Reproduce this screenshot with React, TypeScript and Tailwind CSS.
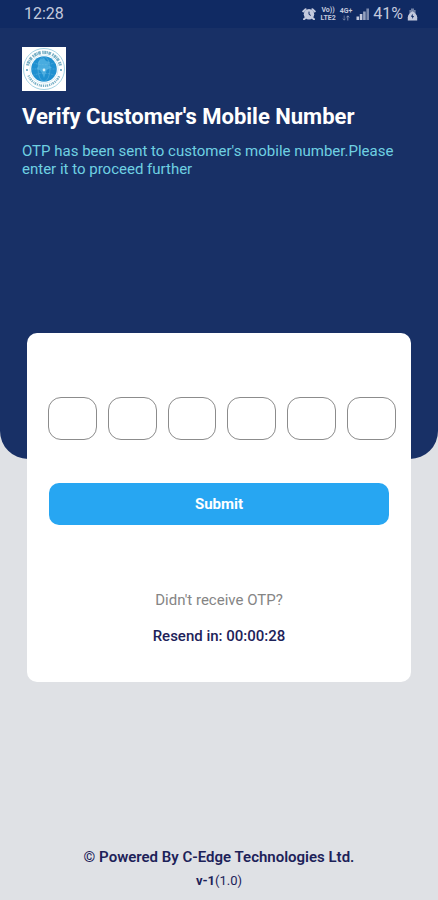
import { useState } from 'react';

const OTP_LENGTH = 6;

const AlarmIcon = () => (
  <svg className="h-3 w-[14px]" viewBox="0 0 14 12" fill="none" aria-hidden="true">
    <circle cx="7" cy="6.2" r="5.2" fill="currentColor" />
    <path d="M1.2 3.4L3.6 1.2M12.8 3.4L10.4 1.2M3.4 10l-1.4 1.3M10.6 10l1.4 1.3" stroke="currentColor" strokeWidth="2" strokeLinecap="round" />
    <path d="M7 3.6v2.8l1.8 1" stroke="#102a63" strokeWidth="1" />
  </svg>
);

const DataArrowsIcon = () => (
  <svg className="h-[6px] w-2" viewBox="0 0 8 6" fill="none" stroke="currentColor" strokeWidth="1" aria-hidden="true">
    <path d="M2.2 0.5v4.6M0.8 3.6l1.4 1.6 1.4-1.6" opacity="0.4" />
    <path d="M5.8 5.5V0.9M4.4 2.4l1.4-1.6 1.4 1.6" opacity="0.6" />
  </svg>
);

const SignalIcon = () => (
  <svg className="h-3 w-[13px]" viewBox="0 0 13 12" fill="currentColor" aria-hidden="true">
    <rect x="0.5" y="8.5" width="2.6" height="3.5" />
    <rect x="3.8" y="6" width="2.6" height="6" />
    <rect x="7.1" y="3.5" width="2.6" height="8.5" opacity="0.75" />
    <rect x="10.4" y="0.5" width="2.6" height="11.5" opacity="0.6" />
  </svg>
);

const BatteryIcon = () => (
  <svg className="h-[13px] w-[11px]" viewBox="0 0 11 13" aria-hidden="true">
    <path d="M4 0.5h3v1.4h1.6v4H2.4v-4H4z" fill="currentColor" opacity="0.55" />
    <path d="M5.5 3.2C8 5 10.2 6.6 10.2 9.2V12.5H0.8V9.2C0.8 6.6 3 5 5.5 3.2z" fill="currentColor" />
    <path d="M5.5 5.8L3.9 8.8h1.3v2.3l1.9-3.2H5.8z" fill="#102a63" />
  </svg>
);

const BankLogo = () => (
  <svg className="h-11 w-11" viewBox="0 0 44 44" fill="none" role="img" aria-label="Bank logo">
    <rect width="44" height="44" fill="#fff" />
    <circle cx="22" cy="22" r="20.5" stroke="#8cc6da" strokeWidth="0.8" />
    {/* lettering band, upper and lower arcs */}
    <path d="M5.6 18.5A16.8 16.8 0 0 1 38.4 18.5" stroke="#3f8fae" strokeWidth="3.2" strokeDasharray="1.5 0.6 2.2 0.5 0.9 0.6 2.6 1.5" opacity="0.7" />
    <path d="M6.5 28.5A16.8 16.8 0 0 0 37.5 28.5" stroke="#3f8fae" strokeWidth="2.4" strokeDasharray="1.2 0.9 0.9 0.7 1.6 0.9" opacity="0.7" />
    <circle cx="22" cy="22" r="14.2" stroke="#b9dfee" strokeWidth="0.6" />
    <circle cx="5" cy="23" r="0.9" fill="#3c8eb0" />
    <circle cx="39" cy="23" r="0.9" fill="#3c8eb0" />
    <circle cx="22" cy="22" r="12.8" fill="#1f90d0" />
    <g stroke="#a9dcf3" strokeWidth="0.6" opacity="0.45">
      <ellipse cx="22" cy="22" rx="6" ry="12.5" />
      <path d="M11 15.5c6 3 16 3 22 0M9.5 22h25M11 28.5c6-3 16-3 22 0" strokeDasharray="2 1" />
    </g>
    <path d="M19 12l3-1 2 3 4 1-2 3 4 2.5-5 2-1.5 4L22 31l-2-5-2.5-3-3-1 2-3-0.5-4z" fill="#74c8ee" opacity="0.5" />
    <circle cx="22" cy="23" r="1.4" fill="#d5f1fb" />
  </svg>
);

const App = () => {
  const [otp, setOtp] = useState<string[]>(Array(OTP_LENGTH).fill(''));

  const handleChange = (index: number, value: string) => {
    setOtp(otp.map((digit, i) => (i === index ? value : digit)));
  };

  return (
    <div className="flex min-h-screen flex-col bg-[#dfe1e5] font-['Roboto',sans-serif]">
      <header className="rounded-b-[28px] bg-[#183066] pb-[281px]">
        <div className="flex h-7 items-center justify-between bg-[#102a63] pr-5 pl-6 text-base text-[#c3c9dd]">
          <span>12:28</span>
          <div className="flex items-center gap-1">
            <AlarmIcon />
            <div className="flex flex-col items-center text-[7px] leading-[8px] font-bold">
              <span>Vo))</span>
              <span>LTE2</span>
            </div>
            <div className="flex flex-col items-center text-[7px] leading-[8px] font-bold">
              <span>4G+</span>
              <DataArrowsIcon />
            </div>
            <SignalIcon />
            <span>41%</span>
            <BatteryIcon />
          </div>
        </div>

        <div className="px-[22px] pt-[19px]">
          <BankLogo />
          <h1 className="mt-3 text-[22px] leading-7 font-bold text-white">Verify Customer's Mobile Number</h1>
          <p className="mt-[11px] text-[15px] leading-[18px] text-[#6fd0e2]">
            OTP has been sent to customer's mobile number.Please enter it to proceed further
          </p>
        </div>
      </header>

      <main className="relative mx-[27px] -mt-[126px] rounded-[10px] bg-white pt-16 pb-9">
        <form onSubmit={(e) => e.preventDefault()}>
          <div className="mr-[15px] ml-[21px] flex gap-[11px]">
            {otp.map((digit, index) => (
              <input
                key={index}
                type="text"
                inputMode="numeric"
                maxLength={1}
                value={digit}
                onChange={(e) => handleChange(index, e.target.value)}
                aria-label={`OTP digit ${index + 1}`}
                className="h-[43px] w-0 flex-1 rounded-[13px] border border-[#8c8c8c] text-center text-lg text-[#183066]"
              />
            ))}
          </div>
          <div className="mt-[43px] px-[22px]">
            <button type="submit" className="h-[42px] w-full rounded-[10px] bg-[#27a6f2] text-[15px] font-bold text-white">
              Submit
            </button>
          </div>
        </form>
        <p className="mt-[65px] text-center text-[15px] leading-5 text-[#858585]">Didn't receive OTP?</p>
        <p className="mt-4 text-center text-[15px] leading-5 font-medium text-[#1d2259]">Resend in: 00:00:28</p>
      </main>

      <footer className="mt-auto pb-[7px] text-center text-[#1d2259]">
        <p className="text-[15px] leading-6 font-semibold">© Powered By C-Edge Technologies Ltd.</p>
        <p className="text-[13px] leading-6">
          <span className="font-bold">v-1</span>(1.0)
        </p>
      </footer>
    </div>
  );
};

export default App;
